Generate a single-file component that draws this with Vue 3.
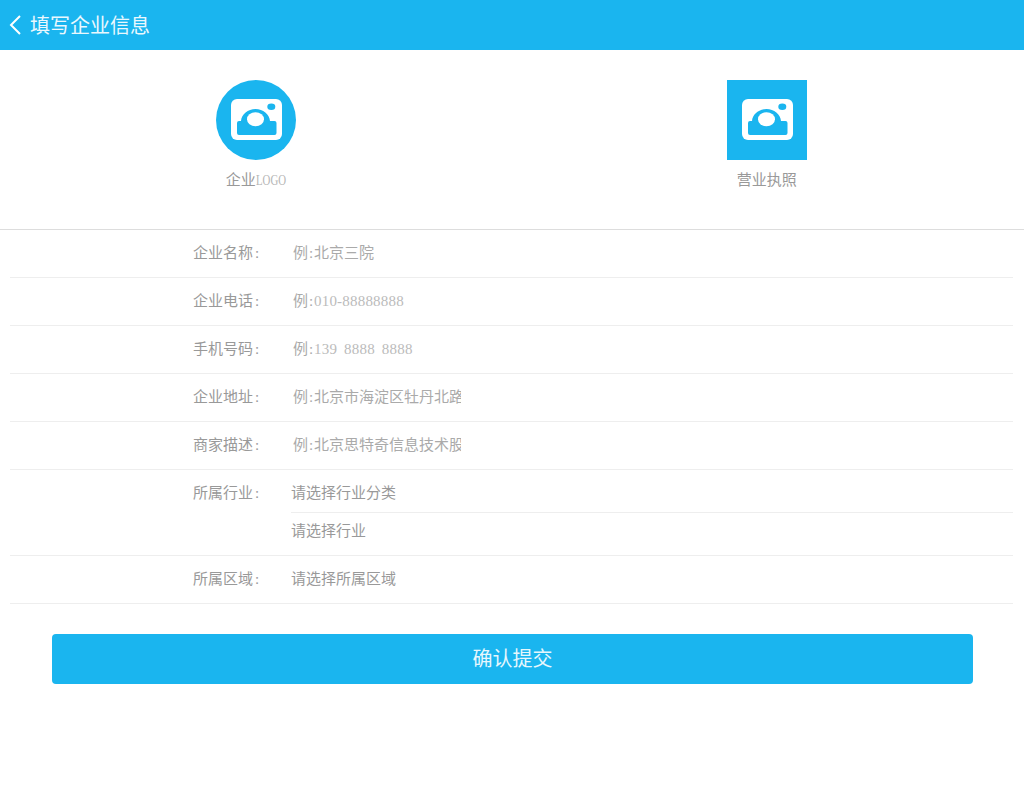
<template>
  <div class="page">
    <header class="top-bar">
      <svg class="back" width="12" height="20" viewBox="0 0 12 20">
        <path d="M11 1 L2 10 L11 19" fill="none" stroke="#fff" stroke-width="2" />
      </svg>
      <span class="title">填写企业信息</span>
    </header>

    <section class="uploads">
      <div class="upload">
        <div class="pic round">
          <svg width="52" height="42" viewBox="0 0 52 42">
            <path fill="#fff" d="M7 0h39a6 6 0 0 1 6 6v29a6 6 0 0 1-6 6H7a6 6 0 0 1-6-6V6a6 6 0 0 1 6-6z" />
            <path fill="#1ab5ef" d="M7 24a2 2 0 0 1 2-2h2c.5-7 7-12 14.500-12s14 5 14.500 12h4.500a2 2 0 0 1 2 2v10a2 2 0 0 1-2 2H9a2 2 0 0 1-2-2z" />
            <ellipse cx="25.500" cy="20.300" rx="8.500" ry="7" fill="#fff" />
            <ellipse cx="41.300" cy="7.700" rx="4" ry="3.200" fill="#1ab5ef" />
          </svg>
        </div>
        <div class="pic-label">企业<span class="latin">LOGO</span></div>
      </div>
      <div class="upload">
        <div class="pic">
          <svg width="52" height="42" viewBox="0 0 52 42">
            <path fill="#fff" d="M7 0h39a6 6 0 0 1 6 6v29a6 6 0 0 1-6 6H7a6 6 0 0 1-6-6V6a6 6 0 0 1 6-6z" />
            <path fill="#1ab5ef" d="M7 24a2 2 0 0 1 2-2h2c.5-7 7-12 14.500-12s14 5 14.500 12h4.500a2 2 0 0 1 2 2v10a2 2 0 0 1-2 2H9a2 2 0 0 1-2-2z" />
            <ellipse cx="25.500" cy="20.300" rx="8.500" ry="7" fill="#fff" />
            <ellipse cx="41.300" cy="7.700" rx="4" ry="3.200" fill="#1ab5ef" />
          </svg>
        </div>
        <div class="pic-label">营业执照</div>
      </div>
    </section>

    <div class="form">
      <div v-for="row in rows" :key="row.label" class="row">
        <div class="label">{{ row.label }}<span class="colon">:</span></div>
        <div class="field">
          <span class="hint">例<span class="hint-colon">:</span><span :class="{ digits: row.digits }">{{ row.hint }}</span></span>
        </div>
      </div>

      <div class="row tall">
        <div class="label">所属行业<span class="colon">:</span></div>
        <div class="selects">
          <div class="select first">请选择行业分类</div>
          <div class="select second">请选择行业</div>
        </div>
      </div>

      <div class="row">
        <div class="label">所属区域<span class="colon">:</span></div>
        <div class="select">请选择所属区域</div>
      </div>
    </div>

    <div class="actions">
      <button class="submit">确认提交</button>
    </div>
  </div>
</template>

<script setup>
const rows = [
  { label: '企业名称', hint: '北京三院' },
  { label: '企业电话', hint: '010-88888888', digits: true },
  { label: '手机号码', hint: '139 8888 8888', digits: true },
  { label: '企业地址', hint: '北京市海淀区牡丹北路' },
  { label: '商家描述', hint: '北京思特奇信息技术股份有限公司' }
]
</script>

<style>
html,
body {
  background: #fff;
}
</style>

<style scoped>
.page {
  min-height: 800px;
  background: #fff;
  font-family: "Liberation Serif", "Noto Sans CJK SC", serif;
  font-size: 15px;
  color: #999;
}

.top-bar {
  display: flex;
  align-items: center;
  height: 50px;
  padding-left: 9px;
  background: #1ab5ef;
  color: #fff;
}

.back {
  margin-right: 9px;
}

.title {
  padding-bottom: 2px;
  font-size: 20px;
  color: #eaf8fe;
}

.uploads {
  display: flex;
  height: 179px;
  padding-top: 30px;
  box-sizing: border-box;
}

.upload {
  flex: 1;
  display: flex;
  flex-direction: column;
  align-items: center;
}

.upload:last-child {
  padding-right: 1px;
}

.upload:last-child .pic-label {
  padding-right: 1px;
}

.pic {
  display: flex;
  align-items: center;
  justify-content: center;
  width: 80px;
  height: 80px;
  background: #1ab5ef;
}

.pic.round {
  border-radius: 50%;
}

.pic-label {
  margin-top: 9px;
  line-height: 22px;
}

.latin {
  display: inline-block;
  width: 30px;
  transform: scaleX(.72);
  transform-origin: left;
  color: #b5b5b5;
}

.form {
  border-top: 1px solid #ddd;
}

.row {
  display: flex;
  align-items: center;
  height: 48px;
  box-sizing: border-box;
  margin: 0 11px 0 10px;
  padding-left: 183px;
  padding-bottom: 4px;
  border-bottom: 1px solid #eee;
}

.row.tall {
  height: 86px;
  padding-bottom: 0;
  align-items: flex-start;
}

.row.tall .label {
  line-height: 47px;
}

.label {
  width: 98px;
  flex-shrink: 0;
}

.colon {
  margin-left: 2px;
}

.field {
  width: 168px;
  margin-left: 2px;
  overflow: hidden;
  white-space: nowrap;
}

.hint {
  color: #aaa;
}

.hint-colon {
  display: inline-block;
  width: 6px;
  text-align: center;
}

.digits {
  color: #bbb;
  letter-spacing: .2px;
  word-spacing: 3px;
}

.selects {
  flex: 1;
}

.select.first {
  height: 42px;
  line-height: 47px;
  border-bottom: 1px solid #eee;
}

.select.second {
  line-height: 36px;
}

.actions {
  padding: 30px 51px 0 52px;
}

.submit {
  display: block;
  width: 100%;
  height: 50px;
  padding: 0 0 3px;
  border: 0;
  border-radius: 4px;
  background: #1ab5ef;
  color: #e6f7fd;
  font-family: inherit;
  font-size: 20px;
}
</style>
